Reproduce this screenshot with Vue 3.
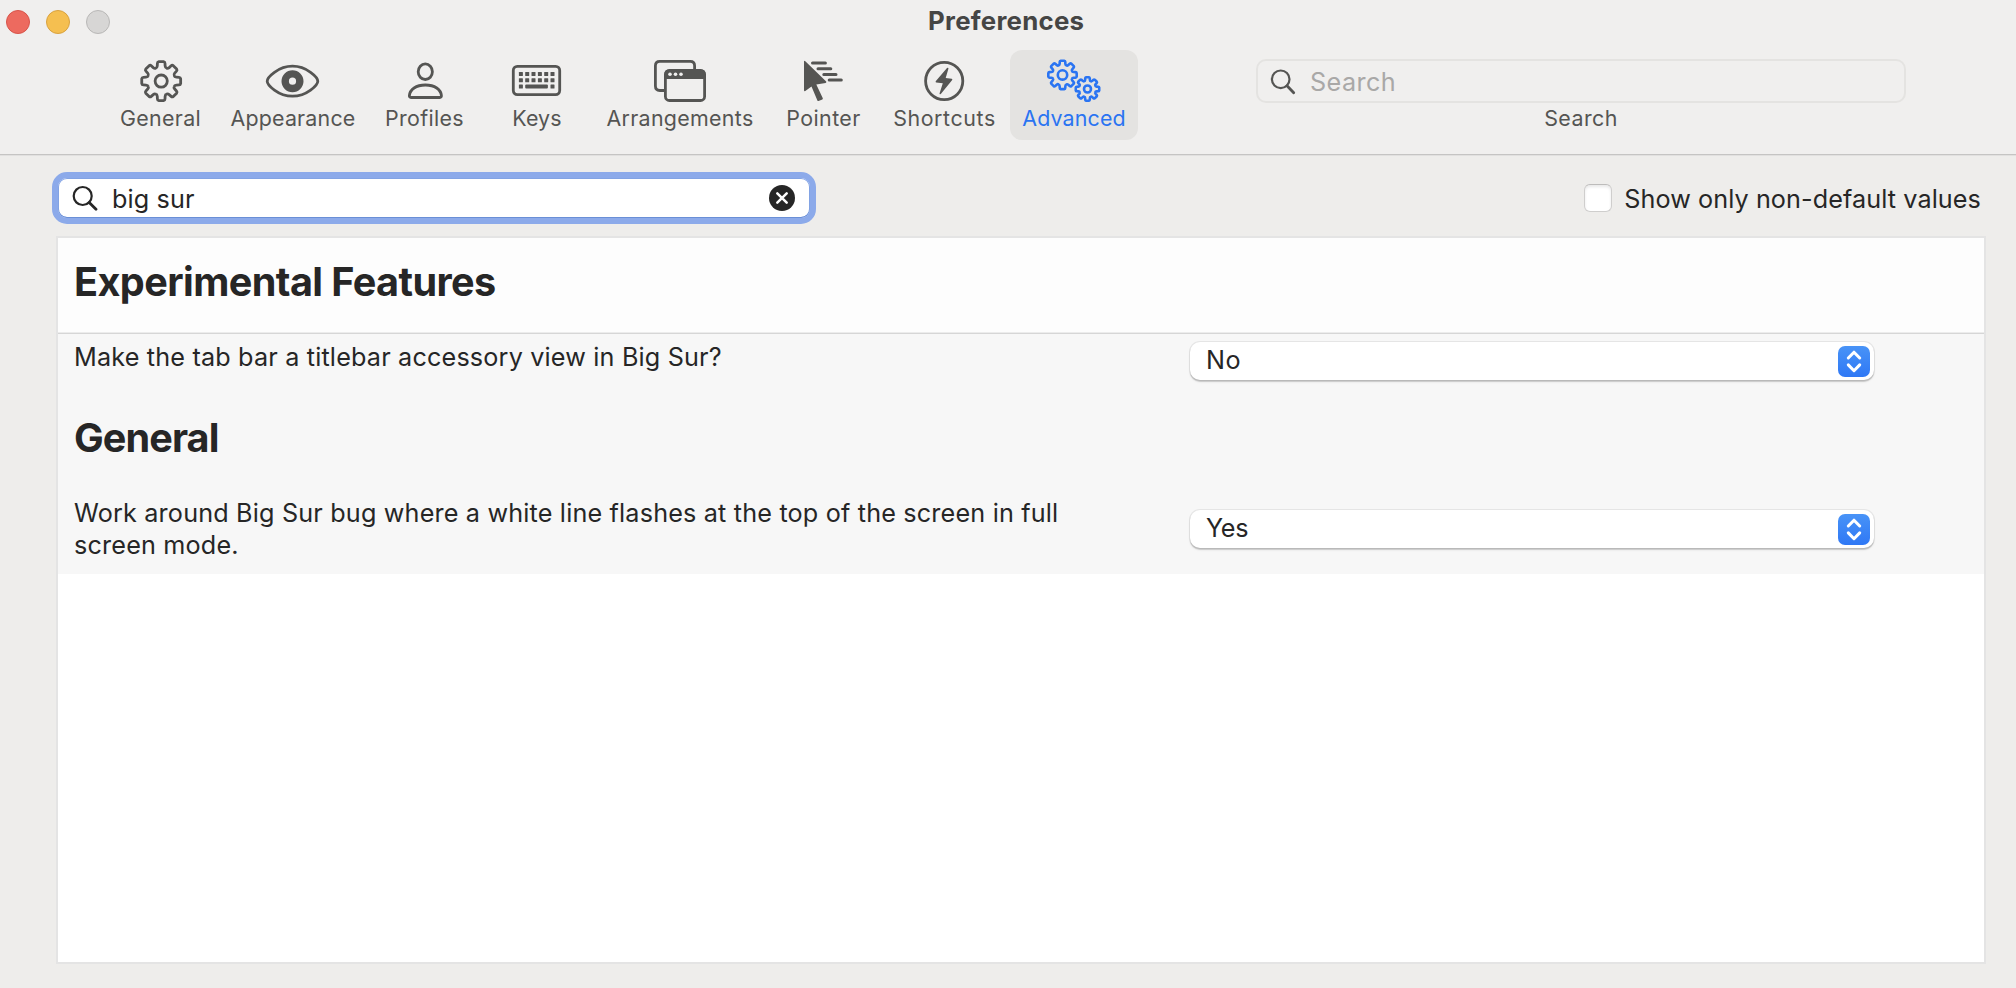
<script setup>
import { ref } from 'vue'

// Outline of an eight-toothed gear with softened corners.
function gear(cx, cy, r) {
  const pt = (deg, k) => {
    const a = ((deg - 90) * Math.PI) / 180
    return `${(cx + Math.cos(a) * r * k).toFixed(2)} ${(cy + Math.sin(a) * r * k).toFixed(2)}`
  }
  let d = ''
  for (let i = 0; i < 8; i++) {
    const a = i * 45
    d += `${i ? 'L' : 'M'}${pt(a - 14.5, 0.8)}`
    d += `L${pt(a - 12, 0.93)}Q${pt(a - 11, 1)} ${pt(a - 7, 1)}`
    d += `L${pt(a + 7, 1)}Q${pt(a + 11, 1)} ${pt(a + 12, 0.93)}`
    d += `L${pt(a + 14.5, 0.8)}Q${pt(a + 17, 0.71)} ${pt(a + 22.5, 0.72)}`
    d += `Q${pt(a + 28, 0.71)} ${pt(a + 30.5, 0.8)}`
  }
  return d + 'Z'
}

const tabs = [
  { id: 'general', label: 'General', tracking: 0.35 },
  { id: 'appearance', label: 'Appearance', tracking: 0.2 },
  { id: 'profiles', label: 'Profiles', tracking: 0.32 },
  { id: 'keys', label: 'Keys', tracking: 0.13 },
  { id: 'arrangements', label: 'Arrangements', tracking: 0.3 },
  { id: 'pointer', label: 'Pointer', tracking: 0.42 },
  { id: 'shortcuts', label: 'Shortcuts', tracking: 0.6 },
  { id: 'advanced', label: 'Advanced', tracking: 0.15 },
]
const active = ref('advanced')
const query = ref('big sur')

const keyXs = [12.1, 18.4, 24.7, 31.1, 37.4, 43.7]
</script>

<template>
  <div class="window">
    <header class="chrome">
      <div class="titlebar">
        <div class="lights">
          <span class="light red"></span>
          <span class="light yellow"></span>
          <span class="light grey"></span>
        </div>
        <h1 class="title">Preferences</h1>
      </div>

      <div class="toolbar">
        <nav class="tabs">
          <button
            v-for="t in tabs"
            :key="t.id"
            class="tab"
            :class="{ active: active === t.id }"
            @click="active = t.id"
          >
            <svg class="icon" width="60" height="46" viewBox="0 0 60 46">
              <g v-if="t.id === 'general'" class="line">
                <path :d="gear(30.2, 22.1, 19.6)" />
                <circle cx="30.2" cy="22.1" r="6.1" />
              </g>
              <g v-else-if="t.id === 'appearance'">
                <path class="line" d="M4.2 22.2C4.2 18.6 15 7.2 29.5 7.2S54.800 18.600 54.800 22.200S44 37.200 29.500 37.200S4.200 25.800 4.200 22.200Z" />
                <circle cx="29.5" cy="22.2" r="7.3" class="pupil" />
              </g>
              <g v-else-if="t.id === 'profiles'" class="line">
                <ellipse cx="30.3" cy="12.7" rx="7.1" ry="7.8" />
                <path d="M16 38.500H44.800Q46.600 38.500 46.400 36.500C45.800 30.500 39.800 26 30.400 26S15 30.500 14.400 36.500Q14.200 38.500 16 38.500Z" />
              </g>
              <g v-else-if="t.id === 'keys'">
                <rect class="line" x="6.3" y="7.4" width="46.4" height="28.2" rx="4" />
                <template v-for="x in keyXs" :key="x">
                  <rect class="key" :x="x - 0.2" y="13" width="4" height="4" rx="0.5" />
                  <rect class="key" :x="x - 0.2" y="19.3" width="4" height="4" rx="0.5" />
                </template>
                <rect class="key" x="11.9" y="25.6" width="4" height="4" rx="0.5" />
                <rect class="key" x="18.2" y="25.6" width="22.7" height="4" rx="1" />
                <rect class="key" x="43.5" y="25.6" width="4" height="4" rx="0.5" />
              </g>
              <g v-else-if="t.id === 'arrangements'">
                <path class="line" d="M14 31.500H9.800Q5.400 31.500 5.400 27.100V6.800Q5.400 2.400 9.800 2.400H40.200Q44.600 2.400 44.600 6.800V11" />
                <rect class="line" x="15.4" y="11.4" width="39.200" height="30.1" rx="4" />
                <path class="solid" d="M14.500 20V14.500Q15 10.500 19 10.500H51Q55 10.500 55.500 14.500V20Z" />
                <circle class="dot" cx="20" cy="15.2" r="1.8" />
                <circle class="dot" cx="25.5" cy="15.2" r="1.8" />
                <circle class="dot" cx="31" cy="15.2" r="1.8" />
              </g>
              <g v-else-if="t.id === 'pointer'">
                <path class="solid" d="M10 2.600Q10 1 11.300 2.200L32.200 22.600Q32.800 23.600 31.600 23.900L22.300 25.600L28.800 39.200Q29 40 28.300 40.400L24.500 42Q23.700 42.200 23.400 41.500L17.500 27.400L11.300 32.100Q10 32.700 10 31Z" />
                <path class="stripe" d="M18.500 4.100H31.400M24 9.800H36.800M29.800 15.500H42M35.200 21H47.300" />
              </g>
              <g v-else-if="t.id === 'shortcuts'">
                <circle class="line" cx="29.2" cy="22" r="18.6" />
                <path class="solid" d="M32 8.900Q33.700 8.300 33.400 9.700L30.700 18.900L36.700 19.700Q37.900 20 37 21.200L26 34.700Q24.300 35.900 24.600 34.300L27.800 24.200L21.200 23.500Q20 23.200 20.900 21.900Z" />
              </g>
              <g v-else class="line fine">
                <path :d="gear(18.5, 15.9, 14.3)" />
                <circle cx="18.5" cy="15.9" r="4.7" />
                <path :d="gear(43.5, 30, 11.8)" />
                <circle cx="43.5" cy="30" r="3.5" />
              </g>
            </svg>
            <span class="tab-label" :style="{ letterSpacing: t.tracking + 'px' }">{{ t.label }}</span>
          </button>
        </nav>

        <div class="toolbar-search">
          <div class="search-box">
            <svg class="lens" width="26" height="26" viewBox="0 0 26 26">
              <circle cx="10.7" cy="10.3" r="8.8" />
              <path d="M17 16.800L23.700 23.800" />
            </svg>
            <span class="placeholder">Search</span>
          </div>
          <span class="tab-label search-label">Search</span>
        </div>
      </div>
    </header>

    <main class="content">
      <div class="filter-row">
        <div class="filter">
          <svg class="lens" width="26" height="26" viewBox="0 0 26 26">
            <circle cx="10.7" cy="11" r="9" />
            <path d="M17.200 17.500L24 24.300" />
          </svg>
          <span class="query">{{ query }}</span>
          <svg class="clear" width="26" height="26" viewBox="0 0 26 26">
            <circle cx="13" cy="13" r="13" />
            <path d="M8.300 8.300L17.700 17.700M17.700 8.300L8.300 17.700" />
          </svg>
        </div>
        <label class="check">
          <span class="box"></span>
          <span class="check-label">Show only non-default values</span>
        </label>
      </div>

      <section class="panel">
        <h2 class="group sticky">Experimental Features</h2>
        <div class="rows">
          <div class="row first">
            <p class="row-label">Make the tab bar a titlebar accessory view in Big Sur?</p>
            <div class="popup">
              <span class="value no">No</span>
              <span class="stepper">
                <svg width="32" height="31" viewBox="0 0 32 31">
                  <path d="M10.300 12L16 6.200L21.700 12M10.300 18.900L16 24.700L21.700 18.900" />
                </svg>
              </span>
            </div>
          </div>
          <h2 class="group">General</h2>
          <div class="row second">
            <p class="row-label">
              Work around Big Sur bug where a white line flashes at the top of the screen in full
              screen mode.
            </p>
            <div class="popup">
              <span class="value yes">Yes</span>
              <span class="stepper">
                <svg width="32" height="31" viewBox="0 0 32 31">
                  <path d="M10.300 12L16 6.200L21.700 12M10.300 18.900L16 24.700L21.700 18.900" />
                </svg>
              </span>
            </div>
          </div>
        </div>
      </section>
    </main>
  </div>
</template>

<style>
body {
  background: #eeedeb;
}
</style>

<style scoped>
.window {
  box-sizing: border-box;
  height: 988px;
  display: flex;
  flex-direction: column;
  overflow: hidden;
  background: #eeedeb;
  color: #262626;
  font-family: Inter, 'Liberation Sans', sans-serif;
  font-size: 25.2px;
  line-height: 32px;
}

.chrome {
  box-sizing: border-box;
  height: 156px;
  background: #f0efee;
  border-bottom: 1px solid #e1e0df;
  box-shadow: inset 0 -1px 0 #c5c4c3;
}

.titlebar {
  display: grid;
  grid-template-columns: 929px auto 1fr;
  height: 50px;
}

.lights {
  display: flex;
  gap: 16px;
  padding: 10px 0 0 6px;
}

.light {
  box-sizing: border-box;
  width: 24px;
  height: 24px;
  border-radius: 50%;
  border: 1px solid;
}

.red {
  background: #ed6a5f;
  border-color: #d8544a;
}

.yellow {
  background: #f5bf50;
  border-color: #d9a23f;
}

.grey {
  background: #d7d6d5;
  border-color: #b9b8b7;
}

.title {
  margin: 0;
  padding-top: 5px;
  font-size: 25.8px;
  line-height: 32px;
  font-weight: 700;
  letter-spacing: 0.27px;
  text-indent: -1px;
  color: #454544;
}

.toolbar {
  display: flex;
}

.tabs {
  display: grid;
  grid-template-columns: 105px 160px 103px 122px 164px 123px 125px 128px;
  padding-left: 108px;
}

.tab {
  box-sizing: border-box;
  height: 90px;
  display: flex;
  flex-direction: column;
  align-items: center;
  padding: 9px 0 0;
  border: 0;
  border-radius: 12px;
  background: none;
  color: #555553;
  font: inherit;
}

.tab:nth-child(7) {
  margin-right: 6px;
}

.tab.active {
  background: #e4e3e1;
  color: #2a74f2;
}

.icon {
  flex: none;
  fill: none;
  stroke: none;
}

.line {
  fill: none;
  stroke: currentColor;
  stroke-width: 2.8;
  stroke-linejoin: round;
}

.fine {
  stroke-width: 2.6;
}

.pupil {
  fill: none;
  stroke: currentColor;
  stroke-width: 7.4;
}

.key,
.solid {
  fill: currentColor;
}

.dot {
  fill: #f0efee;
}

.stripe {
  fill: none;
  stroke: currentColor;
  stroke-width: 3;
  stroke-linecap: round;
}

.tab-label {
  font-size: 21.4px;
  line-height: 26px;
  white-space: nowrap;
}

.toolbar-search {
  display: flex;
  flex-direction: column;
  align-items: center;
  width: 650px;
  margin-left: 118px;
  padding-top: 9px;
  color: #555553;
}

.search-box {
  box-sizing: border-box;
  display: flex;
  align-items: center;
  width: 650px;
  height: 44px;
  margin-bottom: 2px;
  padding: 1px 0 0 12px;
  border: 2px solid #e4e3e1;
  border-radius: 10px;
}

.placeholder {
  margin-left: 14px;
  letter-spacing: 0.4px;
  color: #a9a8a7;
}

.search-label {
  letter-spacing: 0.43px;
}

.lens {
  fill: none;
  stroke: currentColor;
  stroke-width: 2.2;
  stroke-linecap: round;
}

.lens path {
  stroke-width: 2.8;
}

.content {
  flex: 1;
  display: flex;
  flex-direction: column;
  padding: 16px 30px 24px 52px;
}

.filter-row {
  display: flex;
  align-items: flex-start;
  justify-content: space-between;
  padding-bottom: 12px;
}

.filter {
  box-sizing: border-box;
  display: flex;
  align-items: center;
  width: 764px;
  height: 52px;
  padding: 0 15px 0 14px;
  border: 6px solid #8caaea;
  border-radius: 15px;
  background: #fff;
  box-shadow: inset 0 -1px 0 #6a8fd6, inset 0 0 0 1px #82a3e4;
}

.query {
  flex: 1;
  margin-left: 14px;
  padding-top: 1px;
  letter-spacing: 0.13px;
}

.clear circle {
  fill: #262626;
}

.clear path {
  stroke: #fff;
  stroke-width: 2.5;
  stroke-linecap: round;
}

.check {
  display: flex;
  align-items: center;
  height: 52px;
  padding-right: 5px;
}

.box {
  box-sizing: border-box;
  width: 28px;
  height: 28px;
  margin-right: 12px;
  border: 1px solid #cfcecd;
  border-top-color: #bdbcbb;
  border-radius: 6px;
  background: #fff;
  box-shadow: inset 0 2px 3px rgba(0, 0, 0, 0.09);
}

.check-label {
  padding-top: 2px;
  letter-spacing: 0.09px;
}

.panel {
  flex: 1;
  margin-left: 4px;
  border: 2px solid #e4e4e4;
  background: #fff;
}

.group {
  margin: 0;
  padding-left: 16px;
  font-size: 39.6px;
  line-height: 48px;
  font-weight: 700;
  letter-spacing: -0.9px;
}

.sticky {
  box-sizing: border-box;
  height: 96px;
  padding-top: 20px;
  border-bottom: 1px solid #d6d6d6;
  background: #fdfdfd;
  box-shadow: inset 0 -1px 0 #ececec;
  letter-spacing: -0.58px;
}

.rows {
  height: 240px;
  background: #f7f7f7;
}

.row {
  box-sizing: border-box;
  display: flex;
  justify-content: space-between;
  align-items: flex-start;
  padding: 0 110px 0 16px;
}

.first {
  height: 80px;
  padding-top: 7px;
}

.second {
  padding-top: 35px;
}

.row-label {
  width: 1010px;
  margin: 0;
  letter-spacing: 0.175px;
}

.popup {
  box-sizing: border-box;
  display: flex;
  align-items: center;
  justify-content: space-between;
  width: 684px;
  height: 38px;
  margin-top: 1px;
  padding: 0 4px 0 16px;
  border-radius: 10px;
  background: #fff;
  box-shadow: 0 0 0 1px rgba(0, 0, 0, 0.07), 0 1.5px 1px rgba(0, 0, 0, 0.15), 0 2px 3px rgba(0, 0, 0, 0.06);
}

.second .popup {
  margin-top: 13px;
}

.value {
  padding-bottom: 2px;
}

.no {
  letter-spacing: 0.5px;
}

.yes {
  letter-spacing: -0.3px;
}

.stepper {
  display: flex;
  width: 32px;
  height: 31px;
  border-radius: 7px;
  background: linear-gradient(#4893f7, #2f78f5);
}

.stepper path {
  fill: none;
  stroke: #fff;
  stroke-width: 3;
  stroke-linecap: round;
  stroke-linejoin: round;
}
</style>
